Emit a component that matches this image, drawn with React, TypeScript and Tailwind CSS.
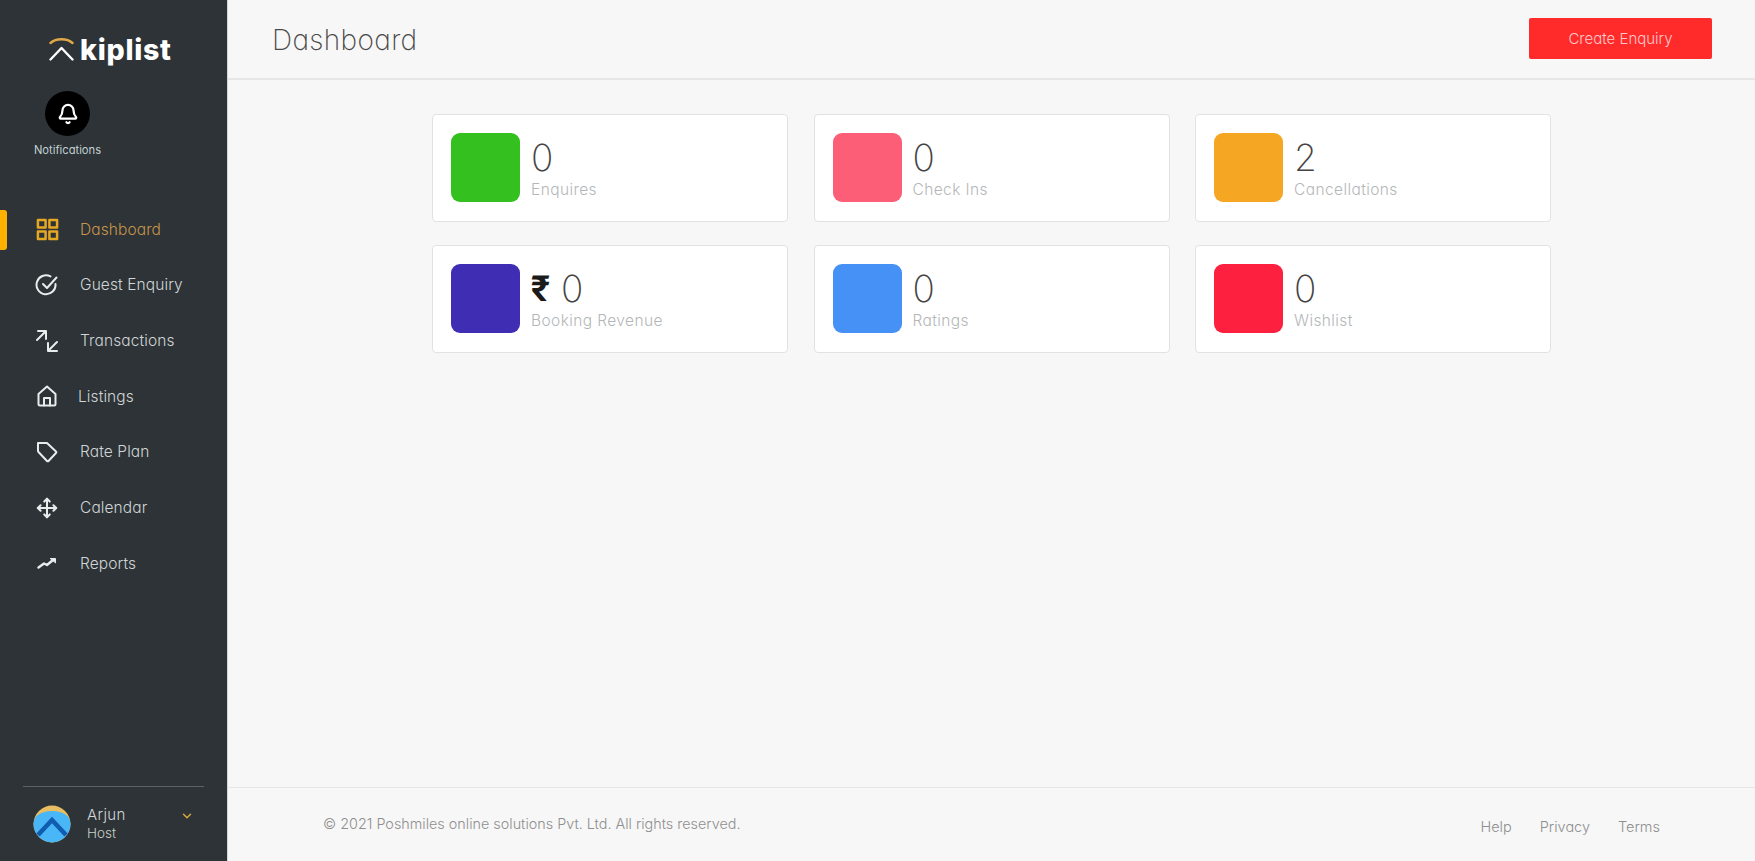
import { Bell, ChevronDown, Move } from 'lucide-react'
import type { ReactNode } from 'react'

const iconProps = {
  viewBox: '0 0 24 24',
  fill: 'none',
  stroke: 'currentColor',
  strokeWidth: 2,
  strokeLinecap: 'round' as const,
  strokeLinejoin: 'round' as const,
}

function GridIcon() {
  return (
    <svg {...iconProps} strokeWidth={2.6} className="w-[23px] h-[23px] text-[#e5a823]">
      <rect x="2" y="2" width="8" height="8" />
      <rect x="14" y="2" width="8" height="8" />
      <rect x="2" y="14" width="8" height="8" />
      <rect x="14" y="14" width="8" height="8" />
    </svg>
  )
}

function CheckIcon() {
  return (
    <svg {...iconProps} className="w-[24px] h-[24px]">
      <path d="M20.5 11a9.5 9.5 0 1 1-5-7.6" />
      <path d="M8 11l4 4 9.5-10.5" />
    </svg>
  )
}

function ArrowsIcon() {
  return (
    <svg {...iconProps} className="w-[24px] h-[24px]">
      <path d="M3 2h8v8M11 2L2 11" />
      <path d="M22 13l-9 9M13 14v8h9" />
    </svg>
  )
}

function HomeIcon() {
  return (
    <svg {...iconProps} className="w-[20px] h-[22px]" viewBox="0 0 20 22">
      <path d="M1.500 9L10 1.500 18.500 9v10a1.500 1.500 0 0 1-1.500 1.500H3A1.500 1.500 0 0 1 1.500 19z" />
      <path d="M7 20.500V13h6v7.500" />
    </svg>
  )
}

function TagIcon() {
  return (
    <svg {...iconProps} className="w-[22px] h-[22px]" viewBox="0 0 22 22">
      <path d="M2 2h9l9 8.500a1 1 0 0 1 0 1.500l-7.500 8a1 1 0 0 1-1.500 0L2.500 11a1.500 1.500 0 0 1-.5-1z" />
    </svg>
  )
}

function TrendIcon() {
  return (
    <svg {...iconProps} strokeWidth={2.4} className="w-[20px] h-[12px]" viewBox="0 0 20 12">
      <path d="M1.500 10.500L7 6.500l3 1.500L16 3" />
      <path d="M13.500 1.500h5v4z" fill="currentColor" strokeWidth={1} />
    </svg>
  )
}

type NavItem = { label: string; icon: ReactNode; active?: boolean; tight?: boolean }

const navItems: NavItem[] = [
  { label: 'Dashboard', icon: <GridIcon />, active: true },
  { label: 'Guest Enquiry', icon: <CheckIcon /> },
  { label: 'Transactions', icon: <ArrowsIcon /> },
  { label: 'Listings', icon: <HomeIcon />, tight: true },
  { label: 'Rate Plan', icon: <TagIcon /> },
  { label: 'Calendar', icon: <Move className="w-[22px] h-[22px]" strokeWidth={2.2} /> },
  { label: 'Reports', icon: <TrendIcon /> },
]

const stats = [
  { value: '0', label: 'Enquires', color: 'bg-[#34c01f]' },
  { value: '0', label: 'Check Ins', color: 'bg-[#fd5e77]' },
  { value: '2', label: 'Cancellations', color: 'bg-[#f5a623]' },
  { value: '0', label: 'Booking Revenue', color: 'bg-[#3f2db3]', rupee: true },
  { value: '0', label: 'Ratings', color: 'bg-[#4691f6]' },
  { value: '0', label: 'Wishlist', color: 'bg-[#fd213f]' },
]

function Logo() {
  return (
    <div className="flex items-center h-[30px] pl-[49px] mt-[34px]">
      <svg viewBox="0 0 25 25" className="w-[25px] h-[25px] -mt-[2px]" fill="none" strokeWidth={2.4} strokeLinecap="round" strokeLinejoin="round">
        <path d="M1.500 7C7 2 18 2 23.500 7" stroke="#dfa94a" />
        <path d="M1.500 23.500L12.500 12 23.500 23.500" stroke="#ffffff" />
      </svg>
      <span className="ml-[6px] mt-[2px] font-extrabold text-[28.500px] leading-none tracking-[0.75px] text-white">kiplist</span>
    </div>
  )
}

function Sidebar() {
  return (
    <aside className="w-[228px] h-full shrink-0 bg-[#2d3337] flex flex-col border-r border-[#d5d5d5]">
      <Logo />
      <div className="w-[135px] flex flex-col items-center mt-[27px]">
        <div className="w-[45px] h-[45px] rounded-full bg-black flex items-center justify-center">
          <Bell className="w-[22px] h-[22px] text-white" strokeWidth={2.4} />
        </div>
        <span className="mt-[5px] text-[11.200px] leading-[18px] text-[#c3d0d0]">Notifications</span>
      </div>
      <nav className="mt-[42.500px] flex flex-col">
        {navItems.map((item) => (
          <div key={item.label} className="relative h-[55.7px] flex items-center pl-[35px]">
            {item.active && <span className="absolute left-0 top-[8px] w-[7px] h-[40px] rounded-r-[3px] bg-[#ffb000]" />}
            <span className="w-[24px] flex justify-center text-[#e8ecec]">{item.icon}</span>
            <span className={`${item.tight ? 'ml-[19px]' : 'ml-[21px]'} text-[15.500px] font-[350] tracking-[0.1px] ${item.active ? 'text-[#c8954a]' : 'text-[#d0d5d5]'}`}>{item.label}</span>
          </div>
        ))}
      </nav>
      <div className="mt-auto mx-[23px] border-t border-[#5c6367] h-[75px] flex items-center pl-[10px]">
        <svg viewBox="0 0 38 38" className="w-[38px] h-[38px] shrink-0">
          <circle cx="19" cy="19" r="18.500" fill="#e6bd62" />
          <path d="M0.500 19C0.500 11 8 6 19 6s18.500 5 18.500 13a18.500 18.500 0 0 1-37 0z" fill="#49b7f7" />
          <path d="M5 30L19 15l14 15" fill="none" stroke="#0f5cb0" strokeWidth={4.500} />
        </svg>
        <div className="ml-[16px] flex flex-col -mt-[3px]">
          <span className="text-[15px] leading-[21px] tracking-[0.4px] font-[350] text-[#d4d8d8]">Arjun</span>
          <span className="text-[13.500px] leading-[16px] font-[350] text-[#c9cfc4]">Host</span>
        </div>
        <ChevronDown className="ml-auto mr-[10px] -mt-[17px] w-[14px] h-[14px] text-[#dba83a]" strokeWidth={2.500} />
      </div>
    </aside>
  )
}

function StatCard({ value, label, color, rupee }: { value: string; label: string; color: string; rupee?: boolean }) {
  return (
    <div className="h-[108px] bg-white border border-[#e2e2e2] rounded-[4px] flex items-center pl-[18px]">
      <div className={`w-[69px] h-[69px] -mt-[2px] rounded-[9px] ${color}`} />
      <div className="ml-[11px] flex flex-col">
        <div className="flex items-center h-[42px]">
          {rupee && <span className="mr-[11px] font-[family-name:Roboto,sans-serif] font-bold text-[36px] leading-none text-[#1a1a1a]">₹</span>}
          <span className="text-[37px] leading-none font-extralight text-[#444444]">{value}</span>
        </div>
        <span className="mt-[1px] text-[15.500px] leading-[20px] tracking-[0.4px] font-light text-[#b4b7b9]">{label}</span>
      </div>
    </div>
  )
}

export default function App() {
  return (
    <div className="w-full h-[861px] flex bg-[#f7f7f7] overflow-hidden font-[family-name:Inter,sans-serif] [font-feature-settings:'cv11']">
      <Sidebar />
      <main className="flex-1 h-full flex flex-col">
        <header className="h-[80px] shrink-0 border-b-2 border-[#e6e6e6] flex items-center justify-between pl-[44px] pr-[43px]">
          <h1 className="pt-[2px] text-[28px] font-extralight text-[#4a4a4a] tracking-[0.35px]">Dashboard</h1>
          <button className="w-[183px] h-[41px] -mt-[2px] pt-[2px] rounded-[2px] bg-[#ff2b2b] text-[15px] font-light text-[#ffc9c9]">Create Enquiry</button>
        </header>
        <section className="flex-1 pt-[34px] pl-[204px]">
          <div className="w-[1119px] grid grid-cols-3 gap-x-[25.500px] gap-y-[23px]">
            {stats.map((s) => (
              <StatCard key={s.label} {...s} />
            ))}
          </div>
        </section>
        <footer className="h-[74px] shrink-0 border-t border-[#e6e6e6] flex justify-between pl-[95px] pr-[95px]">
          <span className="mt-[25px] text-[14.380px] font-light text-[#8f8f8f]">© 2021 Poshmiles online solutions Pvt. Ltd. All rights reserved.</span>
          <div className="mt-[28px] flex gap-[28px] text-[14.500px] font-light text-[#8f8f8f]">
            <span>Help</span>
            <span>Privacy</span>
            <span>Terms</span>
          </div>
        </footer>
      </main>
    </div>
  )
}
